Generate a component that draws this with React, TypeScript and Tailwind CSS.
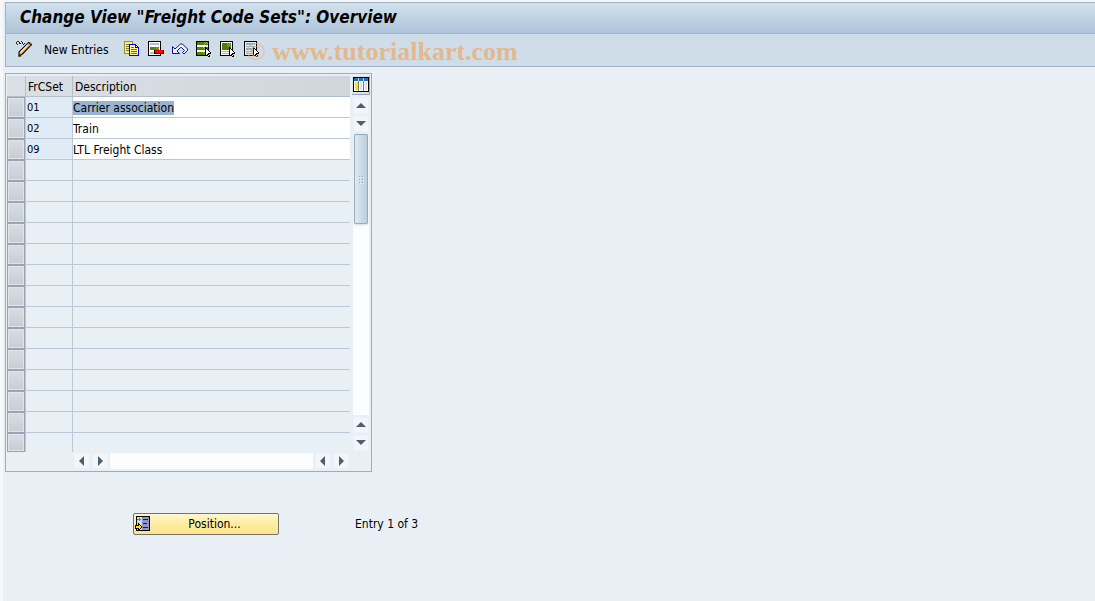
import type { ReactNode } from "react";

interface Entry {
  code: string;
  description: string;
}

const entries: Entry[] = [
  { code: "01", description: "Carrier association" },
  { code: "02", description: "Train" },
  { code: "09", description: "LTL Freight Class" },
];

const emptyRows = Array.from({ length: 14 }, (_, i) => i + entries.length);

function Icon({ children }: { children: ReactNode }) {
  return (
    <svg width="16" height="16" viewBox="0 0 16 16" shapeRendering="crispEdges" aria-hidden="true" className="shrink-0">
      {children}
    </svg>
  );
}

function Cursor() {
  return (
    <>
      <path d="M9 6h1v1h1v1h1v1h1v1h1v1h1v2h-2v1h1v2h-2v-2h-1v1h-2z" fill="#000" />
      <path d="M10 8h1v1h1v1h1v1h1v1h-2v2h1v1h-1v-2h-1v1h-1z" fill="#fff" />
    </>
  );
}

function PencilIcon() {
  return (
    <Icon>
      <path d="M0 1h1v2H0zM1 0h2v1H1zM1 3h1v1H1zM3 1h1v2H3zM5 0h1v1H5zM4 2h1v1H4zM6 1h1v2H6zM7 3h1v1H7zM8 2h1v1H8z" fill="#222" />
      <g shapeRendering="auto">
        <path d="M12.500 1.500l2.500 2.500-8.500 9-3.500 2v-4z" fill="#f5ac45" stroke="#111" strokeWidth="1.200" />
        <path d="M12.300 3.300L4.500 11.500" stroke="#fff3cf" strokeWidth="1.200" />
        <path d="M12.500 2l2 2-1.500 1.500-2-2z" fill="#e89a86" />
        <path d="M13 1.500h1l1.500 1.500v1.500" fill="none" stroke="#26356b" />
        <path d="M3 13v2.500h2.500z" fill="#111" />
      </g>
    </Icon>
  );
}

function CopyIcon() {
  return (
    <Icon>
      <path d="M0 0h9v13H0z" fill="#9a941c" />
      <path d="M1 1h7v11H1z" fill="#ffef66" />
      <path d="M2 3h4v1H2zM2 5h3v1H2zM2 7h3v1H2zM2 9h3v1H2z" fill="#77774a" />
      <path d="M5 3h7v1h1v1h1v1h1v9H5z" fill="#0000f0" />
      <path d="M6 4h5v3h3v7H6z" fill="#fff69a" />
      <path d="M12 5h1v1h-1z" fill="#fff" />
      <path d="M7 6h3v1H7zM7 8h6v1H7zM7 10h6v1H7zM7 12h6v1H7z" fill="#6d6d4a" />
    </Icon>
  );
}

function DeleteIcon() {
  return (
    <Icon>
      <path d="M0 0h13v15H0z" fill="#000" />
      <path d="M1 1h11v13H1z" fill="#fff" />
      <path d="M2 2h9v2H2zM2 11h9v2H2z" fill="#b3bfca" />
      <path d="M2 6h9v3H2z" fill="#608000" />
      <path d="M9 6h1v1H9zM8 7h1v1H8zM10 7h1v1h-1z" fill="#9aad3a" />
      <path d="M6 9h10v4H6z" fill="#000" />
      <path d="M7 10h8v2H7z" fill="#f00" />
      <path d="M7 9h8v1H7z" fill="#f00" />
    </Icon>
  );
}

function UndoIcon() {
  return (
    <Icon>
      <path
        shapeRendering="auto"
        d="M.5 5.500v7h7L5 10l3.500-3.500h1l3 3-2 2L12 13l3.500-3.500V8l-5-5h-2L3 8z"
        fill="#eef3fb"
        stroke="#10109c"
        strokeWidth="1"
      />
    </Icon>
  );
}

function SelectAllIcon() {
  return (
    <Icon>
      <path d="M0 0h13v15H0z" fill="#000" />
      <path d="M1 1h11v13H1z" fill="#fff" />
      <path d="M1 1h11v3H1zM1 6h11v3H1zM1 11h11v3H1z" fill="#4f8500" />
      <path d="M8 1h1v1H8zM10 1h1v1h-1zM9 2h1v1H9zM11 2h1v1h-1zM8 3h1v1H8zM7 6h1v1H7zM9 6h1v1H9zM8 7h1v1H8zM7 11h1v1H7zM8 12h1v1H8z" fill="#9dbb46" />
      <Cursor />
    </Icon>
  );
}

function SelectBlockIcon() {
  return (
    <Icon>
      <path d="M0 0h13v15H0z" fill="#000" />
      <path d="M1 1h11v13H1z" fill="#fff" />
      <path d="M2 2h9v7H2z" fill="#4f7f00" />
      <path d="M7 2h1v1H7zM9 2h1v1H9zM8 3h1v1H8zM10 3h1v1h-1zM7 4h1v1H7zM9 4h1v1H9zM8 5h1v1H8z" fill="#8fae3c" />
      <path d="M2 10h8v1H2zM2 12h9v1H2z" fill="#a7b5c2" />
      <Cursor />
    </Icon>
  );
}

function DeselectAllIcon() {
  return (
    <Icon>
      <path d="M0 0h13v15H0z" fill="#000" />
      <path d="M1 1h11v13H1z" fill="#e6edf2" />
      <path d="M2 2h9v2H2zM2 5h9v1H2zM2 7h9v2H2zM2 10h9v1H2zM2 12h9v1H2z" fill="#93abbb" />
      <Cursor />
    </Icon>
  );
}

function ColumnsIcon() {
  return (
    <Icon>
      <path d="M0 0h16v15H0z" fill="#000" />
      <path d="M1 1h14v13H1z" fill="#fff" />
      <path d="M1 1h14v3H1z" fill="#1f6fb5" />
      <path d="M5 1h1v3H5zM10 1h1v3h-1z" fill="#b8d4ee" />
      <path d="M2 5h3v8H2z" fill="#ffe600" />
      <path d="M5 4h1v10H5zM10 4h1v10h-1z" fill="#777" />
      <path d="M7 5h2v8H7zM12 5h2v8h-2z" fill="#dbe2e9" />
    </Icon>
  );
}

function PositionIcon() {
  return (
    <Icon>
      <path d="M1 0h14v15H1z" fill="#000" />
      <path d="M2 1h5v13H2z" fill="#d5dbe2" />
      <path d="M7 1h7v13H7z" fill="#9096c8" />
      <path d="M2 3h3v1H2zM4 2h1v3H4zM5 3h1v1H5z" fill="#777" />
      <path d="M8 3h5v1H8zM8 7h4v1H8zM8 11h5v1H8z" fill="#222" />
      <path d="M0 9h3V7h1v1h1v1h1v1h1v2H6v1H5v1H4v1H3v-2H0z" fill="#000" />
      <path d="M1 10h3V9h1v1h1v2H5v1H4v-1H1z" fill="#ffe900" />
    </Icon>
  );
}

function ToolButton({ label, children }: { label: string; children: ReactNode }) {
  return (
    <button type="button" aria-label={label} className="flex h-4 w-4 items-center">
      {children}
    </button>
  );
}

const arrows = {
  up: "M2 7h10L7 2z",
  down: "M2 2h10L7 7z",
  left: "M9 0v10L4 5z",
  right: "M5 0v10l5-5z",
};

function ScrollButton({ direction }: { direction: keyof typeof arrows }) {
  return (
    <button
      type="button"
      aria-label={`Scroll ${direction}`}
      className="flex h-4 w-4 shrink-0 items-center justify-center border border-[#edf2f6] bg-[#f2f6fa]"
    >
      <svg width="14" height="10" viewBox="0 0 14 10" className="shrink-0" aria-hidden="true">
        <path d={arrows[direction]} fill="#4a5f70" />
      </svg>
    </button>
  );
}

function RowSelector({ row, last = false }: { row: number; last?: boolean }) {
  return (
    <td className="border-r border-[#bcc8d4] p-0">
      <button
        type="button"
        aria-label={`Select row ${row + 1}`}
        className={`block w-full border border-[#98a4b4] bg-linear-to-b from-[#d8dde3] to-[#c8cdd5] shadow-[inset_0_0_0_1px_#e1e5ea] ${last ? "h-[19px]" : "h-[21px]"}`}
      />
    </td>
  );
}

function EntriesTable() {
  return (
    <table className="w-full table-fixed border-separate border-spacing-0">
      <colgroup>
        <col className="w-[19px]" />
        <col className="w-[47px]" />
        <col />
      </colgroup>
      <thead>
        <tr className="h-[21px] bg-linear-to-r from-[#d9dfe5] to-[#d1d6dc] text-left">
          <th className="border-r border-b border-[#b3bfcb] p-0" aria-label="Selection" />
          <th className="border-r border-b border-[#b3bfcb] p-0 pt-px pl-[2px] font-normal">FrCSet</th>
          <th className="border-b border-[#b3bfcb] p-0 pt-px pl-[2px] font-normal">Description</th>
        </tr>
      </thead>
      <tbody>
        {entries.map((entry, i) => (
          <tr key={entry.code} className="h-[21px]">
            <RowSelector row={i} />
            <td className="border-r border-b border-[#bcc8d8] bg-[#dfecf6] p-0 pt-[2px] pl-px text-[11px]">
              {entry.code}
            </td>
            <td className="border-b border-[#bcc8d8] bg-white p-0 pt-[2px]">
              <input
                type="text"
                aria-label={`Description ${entry.code}`}
                defaultValue={entry.description}
                className={`block h-[14px] max-w-full leading-[14px] outline-none [field-sizing:content] ${i === 0 ? "bg-[#98b4d2]" : ""}`}
              />
            </td>
          </tr>
        ))}
        {emptyRows.map((row, i) => {
          const last = i === emptyRows.length - 1;
          return (
            <tr key={row}>
              <RowSelector row={row} last={last} />
              <td className={`border-r border-[#bcc8d8] p-0 ${last ? "" : "border-b"}`} />
              <td className={`border-[#bcc8d8] p-0 ${last ? "" : "border-b"}`} />
            </tr>
          );
        })}
      </tbody>
    </table>
  );
}

function VerticalScroll() {
  return (
    <div className="flex flex-col items-center">
      <button
        type="button"
        aria-label="Table settings"
        className="flex h-[19px] w-[18px] items-center justify-center border-r border-b border-[#98a4b4] bg-[#dde2e8]"
      >
        <ColumnsIcon />
      </button>
      <div className="mt-[3px] flex flex-1 flex-col gap-[2px] pb-px">
        <ScrollButton direction="up" />
        <ScrollButton direction="down" />
        <div className="flex-1 bg-[#fafcfd] px-px">
          <div className="flex h-[90px] items-center justify-center rounded-[1px] border border-[#98aabd] bg-linear-to-r from-[#e1e9f1] to-[#bdcddd] shadow-sm">
            <div className="grid grid-cols-2 gap-[2px]">
              {[0, 1, 2, 3, 4, 5].map((dot) => (
                <span key={dot} className="h-px w-px bg-[#9aabbc] shadow-[1px_1px_0_#f5f8fb]" />
              ))}
            </div>
          </div>
        </div>
        <ScrollButton direction="up" />
        <ScrollButton direction="down" />
      </div>
    </div>
  );
}

export default function App() {
  return (
    <div className="flex min-h-screen bg-[#f5f8fa] pt-[2px] pl-[3px] font-['DejaVu_Sans_Condensed','DejaVu_Sans',sans-serif] text-[12px] leading-[16px] text-black">
      <div className="min-w-0 flex-1 bg-[#e8f0f6] pl-[2px]">
        <header className="border-t border-l border-[#a1b4c7]">
          <h1 className="border-b border-[#9fb4c9] bg-linear-to-b from-[#d3e1ec] to-[#aec4da] pb-[2px] pl-[14px] text-[17px] leading-[28px] font-bold italic">
            Change View "Freight Code Sets": Overview
          </h1>
          <div className="flex h-[33px] items-center border-b border-[#9fb2c5] bg-[#cfdde8] pb-[2px] pl-[10px]">
            <ToolButton label="Display / change">
              <PencilIcon />
            </ToolButton>
            <button type="button" className="ml-[12px] w-[80px] pt-px text-left">
              New Entries
            </button>
            <div className="flex gap-2">
              <ToolButton label="Copy">
                <CopyIcon />
              </ToolButton>
              <ToolButton label="Delete">
                <DeleteIcon />
              </ToolButton>
              <ToolButton label="Undo">
                <UndoIcon />
              </ToolButton>
              <ToolButton label="Select all">
                <SelectAllIcon />
              </ToolButton>
              <ToolButton label="Select block">
                <SelectBlockIcon />
              </ToolButton>
              <ToolButton label="Deselect all">
                <DeselectAllIcon />
              </ToolButton>
            </div>
            <p className="relative -ml-[14px] pt-[6px] font-['Liberation_Serif',serif] text-[26px] leading-[28px] font-bold whitespace-nowrap text-[#e3b88d]">
              <span className="font-normal text-[#e5ac78]/70">©</span> www.tutorialkart.com
            </p>
          </div>
        </header>

        <main>
          <section className="mt-[6px] w-[367px] border border-[#8fb0cf] px-px pt-[2px] pb-px">
            <div className="flex">
              <div className="min-w-0 flex-1">
                <EntriesTable />
              </div>
              <div className="flex w-5 justify-end">
                <VerticalScroll />
              </div>
            </div>
            <div className="flex gap-[2px] pt-px pr-[21px] pb-px pl-[67px]">
              <ScrollButton direction="left" />
              <ScrollButton direction="right" />
              <div className="flex-1 bg-[#fafcfd]" />
              <ScrollButton direction="left" />
              <ScrollButton direction="right" />
            </div>
          </section>

          <div className="mt-[41px] flex items-center pl-[128px]">
            <button
              type="button"
              className="flex h-[22px] w-[146px] items-center rounded-[2px] border border-[#77756a] bg-linear-to-b from-[#fff6cf] via-[#feeca0] to-[#fce48c] pl-px"
            >
              <PositionIcon />
              <span className="flex-1 text-center">Position...</span>
            </button>
            <p className="ml-[76px]">Entry 1 of 3</p>
          </div>
        </main>
      </div>
    </div>
  );
}
